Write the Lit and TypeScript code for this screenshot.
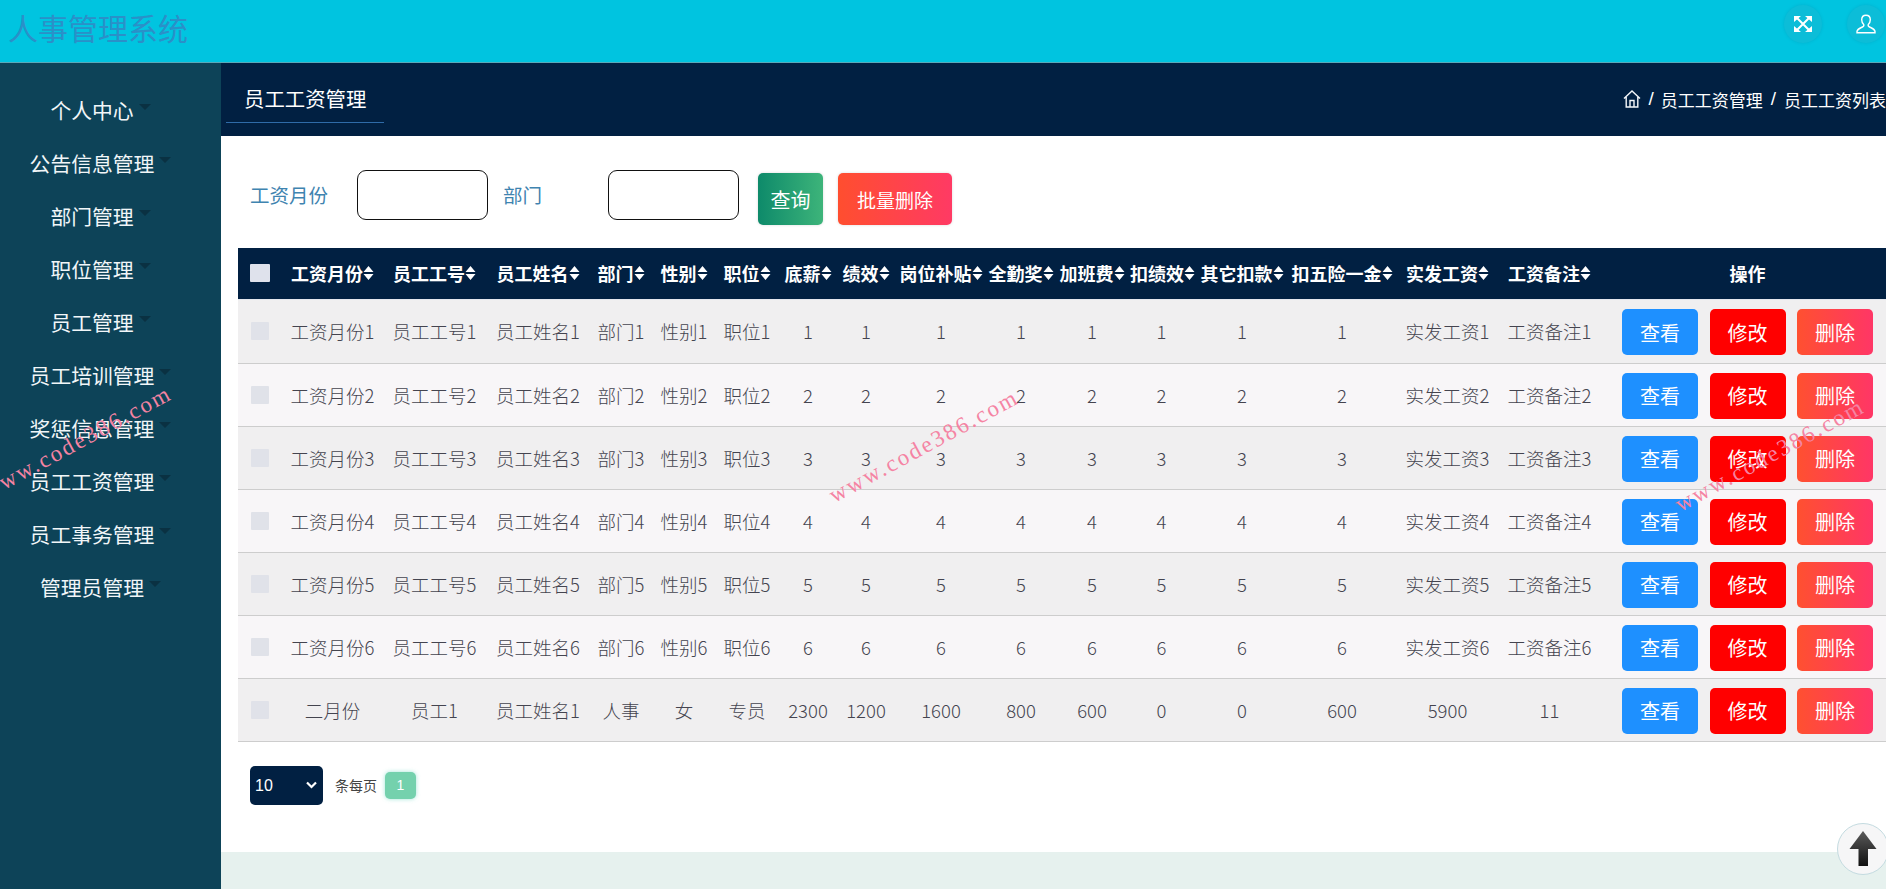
import { LitElement, html, css, svg } from "lit";
import { customElement } from "lit/decorators.js";

const menus = ["个人中心","公告信息管理","部门管理","职位管理","员工管理","员工培训管理","奖惩信息管理","员工工资管理","员工事务管理","管理员管理"];
const cols = [
  ["工资月份",101],["员工工号",103],["员工姓名",104],["部门",62],["性别",64],["职位",62],["底薪",60],["绩效",56],
  ["岗位补贴",94],["全勤奖",66],["加班费",76],["扣绩效",63],["其它扣款",98],["扣五险一金",102],["实发工资",109],["工资备注",95],
] as [string, number][];
const labelled = new Set([0,1,2,3,4,5,14,15]);
const rows: string[][] = [1,2,3,4,5,6].map(n =>
  cols.map(([c], i) => (labelled.has(i) ? c + n : String(n))));
rows.push(["二月份","员工1","员工姓名1","人事","女","专员","2300","1200","1600","800","600","0","0","600","5900","11"]);

const sortIcon = svg`<svg class="sort" viewBox="0 0 11 16" width="11" height="16"><path d="M5.500 1 10.500 7H.5ZM5.500 15 .5 9h10Z" fill="#fff"/></svg>`;

@customElement("app-root")
export class AppRoot extends LitElement {
  static styles = css`
    :host { display: block; width: 100vw; height: 100vh; overflow: hidden; position: relative;
      font-family: "Noto Sans CJK SC", "Liberation Sans", sans-serif; }
    .page { display: flex; flex-direction: column; height: 889px; }
    .top { height: 62px; flex: none; background: #00c4e0; border-bottom: 1px solid #5aa9b9; display: flex; align-items: flex-start; justify-content: space-between; }
    .brand { margin-left: 8px; font-size: 30px; line-height: 54px; color: #2a90c8; font-weight: 400; }
    .tools { display: flex; gap: 25px; margin: 5px 1px 0 0; width: 101px; }
    .tool { width: 38px; height: 38px; border-radius: 50%; background: #0cbdd8; box-shadow: 0 0 3px rgba(0,120,150,.25); display: flex; align-items: center; justify-content: center; flex: none; }
    .body { flex: 1; display: flex; min-height: 0; }
    .side { width: 221px; flex: none; background: #0d4358; padding: 20px 20px 0 0; box-sizing: border-box; display: flex; flex-direction: column; }
    .menu { height: 53px; display: flex; align-items: center; justify-content: center; gap: 5px; color: #f1f6f8; font-size: 20.8px; white-space: nowrap; }
    .caret { width: 0; height: 0; border: 6px solid transparent; border-top: 6px solid rgba(10,35,50,.55); border-bottom: 0; margin-top: -5px; }
    .main { flex: 1; min-width: 0; display: flex; flex-direction: column; }
    .bar { height: 73px; flex: none; background: #012042; display: flex; justify-content: space-between; color: #fff; }
    .tab { margin-left: 5px; width: 158px; height: 60px; box-sizing: border-box; border-bottom: 1px solid #2f6ba8; font-size: 20.4px; padding-left: 18px; line-height: 70px; white-space: nowrap; }
    .crumb { display: flex; align-items: center; gap: 7px; font-size: 17px; height: 72px; white-space: nowrap; color: #fff; }
    .crumb .sl { font-family: "Liberation Sans", sans-serif; font-size: 19px; }
    .crumb .sl.mid { margin: 0 1px; }
    .content { flex: 1; background: #fff; min-height: 0; overflow: hidden; }
    .form { height: 112px; display: flex; align-items: flex-start; padding: 34px 0 0 29px; box-sizing: border-box; }
    .lab { font-size: 19.5px; color: #3f84b0; line-height: 50px; white-space: nowrap; }
    .lab.a { width: 107px; }
    .lab.b { width: 105px; }
    .inp { width: 131px; height: 50px; box-sizing: border-box; border: 1px solid #111; border-radius: 9px; background: #fff; margin-right: 15px; flex: none; }
    .inp.b { margin-right: 19px; }
    .btn { height: 52px; margin-top: 3px; border: 0; border-radius: 5px; color: #fff; font-family: inherit; padding: 0; box-shadow: 0 0 3px rgba(0,0,0,.15); }
    .q { width: 65px; font-size: 20px; margin-right: 15px; background: linear-gradient(90deg, #0e8a6a, #3db47a); }
    .d { width: 114px; font-size: 19px; background: linear-gradient(90deg, #ff4e2f, #ff3a64); }
    .wrap { margin-left: 17px; }
    table { border-collapse: collapse; table-layout: fixed; width: 1660px; }
    th { height: 51px; box-sizing: border-box; background: #012042; color: #fff; font-size: 18px; font-weight: 700; padding: 0; white-space: nowrap; border-bottom: 1px solid #e4e7ee; }
    th .in { display: inline-flex; align-items: center; }
    .sort { flex: none; }
    td { height: 62px; padding: 0; text-align: center; font-size: 18.5px; font-weight: 300; color: #44444f; border-bottom: 1px solid #cdcdcd; white-space: nowrap; }
    tbody tr:first-child td { height: 63px; }
    tr:nth-child(odd) td { background: #f0eff0; }
    tr:nth-child(even) td { background: #f8f6f8; }
    input[type=checkbox] { appearance: none; display: block; margin: 0 auto; width: 18px; height: 18px; background: #e0e2e9; border-radius: 1px; }
    th input[type=checkbox] { width: 20px; background: #dfe2ec; }
    .acts { display: flex; gap: 11.5px; justify-content: center; margin-top: 2px; }
    .act { width: 76px; height: 46px; border: 0; border-radius: 5px; color: #fff; font-size: 20px; font-family: inherit; padding: 0; }
    .view { background: #1e90ff; }
    .edit { background: #ff0000; }
    .del { background: linear-gradient(90deg, #ff5030, #ff3666); }
    .pager { display: flex; align-items: center; margin: 24px 0 0 29px; }
    .selbox { position: relative; width: 73px; height: 39px; flex: none; }
    select { appearance: none; display: block; width: 73px; height: 39px; background: #012042; color: #fff; border: 0; border-radius: 5px; font-size: 16px; font-family: "Liberation Sans", sans-serif; padding: 0 0 0 5px; }
    .chev { position: absolute; right: 6px; top: 15px; pointer-events: none; }
    .per { font-size: 14px; color: #444; margin: 0 8px 0 12px; }
    .num { width: 31px; height: 27px; border-radius: 5px; background: #74d1ad; color: #fff; font-size: 14px; display: flex; align-items: center; justify-content: center; box-shadow: 0 0 4px rgba(120,220,200,.7); font-family: "Liberation Sans", sans-serif; }
    .foot { height: 37px; flex: none; background: #e6f1ee; }
    .up { position: absolute; left: 1837px; top: 823px; width: 52px; height: 52px; box-sizing: border-box; border-radius: 50%; background: #f6f6f7; border: 1px solid #c4dbe0; display: flex; align-items: center; justify-content: center; }
    .mark { position: absolute; color: #f583a3; font: 23px/28px "Liberation Serif", serif; letter-spacing: 2.3px; transform: rotate(-28.5deg); transform-origin: 0 50%; white-space: nowrap; pointer-events: none; }
  `;

  render() {
    return html`
      <div class="page">
        <header class="top">
          <div class="brand">人事管理系统</div>
          <div class="tools">
            <div class="tool">
              <svg width="20" height="18" viewBox="0 0 20 18" fill="none" stroke="#fff" stroke-width="2"><path d="M4 3 16 15M16 3 4 15"/><path d="M1 7V1h7L1 7ZM19 7V1h-7l7 6ZM1 11v6h7l-7-6ZM19 11v6h-7l7-6Z" fill="#fff" stroke="none"/></svg>
            </div>
            <div class="tool">
              <svg width="20" height="20" viewBox="0 0 20 20" fill="none" stroke="#fff" stroke-width="1.4"><path d="M10 1.200c-2.800 0-4.300 2-4.300 4.600 0 2 .9 3.600 2 4.700.4 1-.1 1.900-1.300 2.500-2 1-5 1.900-5.400 4.400v1.300h18v-1.300c-.4-2.500-3.400-3.400-5.400-4.400-1.200-.6-1.700-1.500-1.300-2.500 1.100-1.100 2-2.700 2-4.700 0-2.600-1.500-4.600-4.300-4.600Z"/></svg>
            </div>
          </div>
        </header>
        <div class="body">
          <nav class="side">
            ${menus.map(m => html`<div class="menu"><span>${m}</span><i class="caret"></i></div>`)}
          </nav>
          <main class="main">
            <div class="bar">
              <div class="tab">员工工资管理</div>
              <div class="crumb">
                <svg width="18" height="18" viewBox="0 0 18 18" fill="none" stroke="#f4f7fa" stroke-width="1.4"><path d="M1 8.500 9 1l8 7.500M3.200 7v10h11.600V7M7 17v-6.500h4V17"/></svg>
                <span class="sl">/</span><span>员工工资管理</span><span class="sl mid">/</span><span>员工工资列表</span>
              </div>
            </div>
            <section class="content">
              <div class="form">
                <span class="lab a">工资月份</span>
                <input class="inp" />
                <span class="lab b">部门</span>
                <input class="inp b" />
                <button class="btn q">查询</button>
                <button class="btn d">批量删除</button>
              </div>
              <div class="wrap">
                <table>
                  <colgroup>
                    <col style="width:44px" />
                    ${cols.map(([, w]) => html`<col style="width:${w}px" />`)}
                    <col style="width:301px" />
                  </colgroup>
                  <thead>
                    <tr>
                      <th><input type="checkbox" /></th>
                      ${cols.map(([c]) => html`<th><span class="in">${c}${sortIcon}</span></th>`)}
                      <th>操作</th>
                    </tr>
                  </thead>
                  <tbody>
                    ${rows.map(r => html`<tr>
                      <td><input type="checkbox" /></td>
                      ${r.map(v => html`<td>${v}</td>`)}
                      <td><div class="acts">
                        <button class="act view">查看</button>
                        <button class="act edit">修改</button>
                        <button class="act del">删除</button>
                      </div></td>
                    </tr>`)}
                  </tbody>
                </table>
              </div>
              <div class="pager">
                <div class="selbox">
                  <select><option>10</option><option>20</option><option>50</option></select>
                  <svg class="chev" width="11" height="8" viewBox="0 0 11 8" fill="none" stroke="#fff" stroke-width="2.200"><path d="M1 1.500 5.500 6 10 1.500"/></svg>
                </div>
                <span class="per">条每页</span>
                <span class="num">1</span>
              </div>
            </section>
            <div class="foot"></div>
          </main>
        </div>
      </div>
      <div class="mark" style="left:-16px;top:479px">www.code386.com</div>
      <div class="mark" style="left:831px;top:483px">www.code386.com</div>
      <div class="mark" style="left:1677px;top:492px">www.code386.com</div>
      <div class="up">
        <svg width="28" height="36" viewBox="0 0 28 36"><defs><linearGradient id="g" x1="0" y1="0" x2="0" y2="1"><stop offset="0" stop-color="#5a5a5a"/><stop offset="1" stop-color="#111"/></linearGradient></defs><path d="M14 0 27.500 18H19V35H9.500V18H.5Z" fill="url(#g)"/></svg>
      </div>
    `;
  }
}
